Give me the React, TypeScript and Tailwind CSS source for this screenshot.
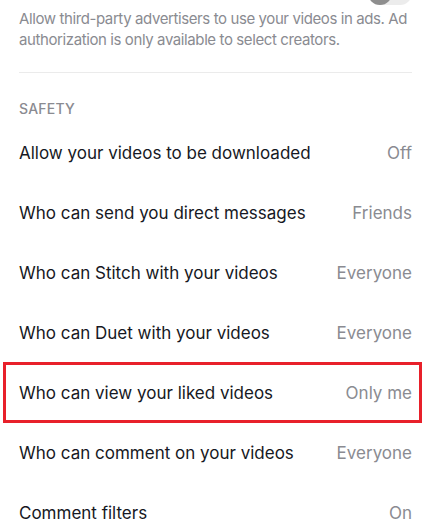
import React from "react";

const rows: [string, string][] = [
  ["Allow your videos to be downloaded", "Off"],
  ["Who can send you direct messages", "Friends"],
  ["Who can Stitch with your videos", "Everyone"],
  ["Who can Duet with your videos", "Everyone"],
  ["Who can view your liked videos", "Only me"],
  ["Who can comment on your videos", "Everyone"],
  ["Comment filters", "On"],
];

export default function App() {
  return (
    <div
      className="relative w-[432px] h-[525px] overflow-hidden bg-white"
      style={{ fontFamily: "Inter, 'Liberation Sans', sans-serif" }}
    >
      {/* partially visible toggle */}
      <div className="absolute right-[20px] top-[-19px] w-[44px] h-[24px] rounded-full bg-[#ececec]">
        <div className="absolute left-0 top-0 w-[24px] h-[24px] rounded-full bg-[#8e8e8e]" />
      </div>

      <div className="px-[19px] pr-[18px] pt-[8px]">
        <p className="text-[15px] leading-[21px] text-[#8a8b91] tracking-[-0.4px]">
          Allow third-party advertisers to use your videos in ads. Ad authorization is only available to select creators.
        </p>
        <div className="mt-[22px] mr-[2px] h-px bg-[#ebebeb]" />
        <div className="mt-[26px] text-[14px] leading-[20px] font-medium text-[#8a8b91] tracking-[0.2px]">
          SAFETY
        </div>
        <div className="mt-[4px] mr-[2px] flex flex-col">
          {rows.map(([label, value]) => (
            <div key={label} className="relative flex h-[60px] items-center justify-between pt-[1px]">
              <span className="text-[17px] text-[#161823]">{label}</span>
              <span className="text-[17px] text-[#8a8b91]">{value}</span>
              {label === "Who can view your liked videos" && (
                <div className="absolute left-[-16px] right-[-10px] top-[-1px] bottom-[0px] border-[3px] border-[#e8202a] pointer-events-none" />
              )}
            </div>
          ))}
        </div>
      </div>
    </div>
  );
}
